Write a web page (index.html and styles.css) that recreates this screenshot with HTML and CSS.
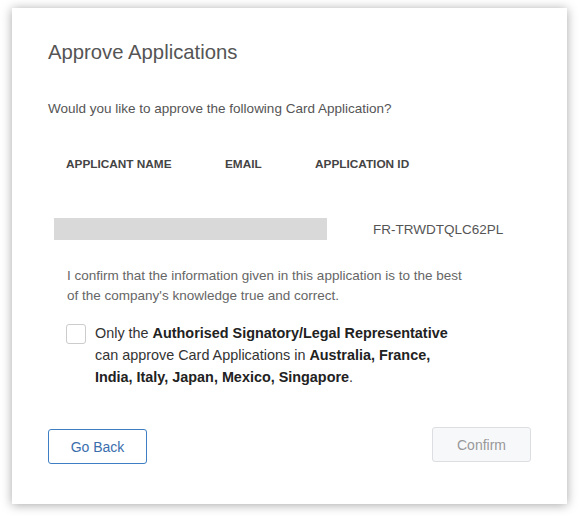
FILE: index.html
```html
<!DOCTYPE html>
<html>
<head>
<meta charset="utf-8">
<link rel="stylesheet" href="styles.css">
</head>
<body>
<div class="modal">
  <h1 class="title">Approve Applications</h1>
  <p class="lead">Would you like to approve the following Card Application?</p>
  <div class="table">
    <div class="row head">
      <div class="c1">APPLICANT NAME</div>
      <div class="c2">EMAIL</div>
      <div class="c3">APPLICATION ID</div>
    </div>
    <div class="row data">
      <div class="redacted"></div>
      <div class="appid">FR-TRWDTQLC62PL</div>
    </div>
  </div>
  <p class="confirm-text">I confirm that the information given in this application is to the best of the company's knowledge true and correct.</p>
  <label class="check">
    <span class="box"></span>
    <span class="check-text">Only the <b>Authorised Signatory/Legal Representative</b> can approve Card Applications in <b>Australia, France, India, Italy, Japan, Mexico, Singapore</b>.</span>
  </label>
  <div class="actions">
    <button class="btn back">Go Back</button>
    <button class="btn confirm" disabled>Confirm</button>
  </div>
</div>
</body>
</html>
```
FILE: styles.css
```css
html, body {
  margin: 0;
  padding: 0;
  background: #fff;
}
body {
  padding: 8px 12px 12px 12px;
  font-family: "Liberation Sans", Arial, sans-serif;
}
.modal {
  width: 555px;
  height: 496px;
  box-sizing: border-box;
  background: #fff;
  box-shadow: 0 1px 10px rgba(0,0,0,0.35);
  padding: 32px 36px 0 36px;
}
.title {
  margin: 0;
  font-size: 20.3px;
  font-weight: normal;
  color: #555;
  line-height: 24px;
}
.lead {
  margin: 37px 0 0 0;
  font-size: 13.5px;
  color: #555;
  line-height: 16px;
}
.table {
  margin-top: 39px;
}
.row {
  display: flex;
  align-items: center;
}
.head {
  padding-left: 18px;
  font-size: 11.8px;
  font-weight: bold;
  color: #444;
  line-height: 16px;
}
.c1 { width: 159px; }
.c2 { width: 90px; }
.data {
  margin-top: 46px;
  padding-left: 6px;
}
.redacted {
  width: 273px;
  height: 22px;
  background: #d9d9d9;
}
.appid {
  margin-left: 46px;
  font-size: 13.5px;
  color: #555;
}
.confirm-text {
  margin: 26px 0 0 0;
  padding-left: 19px;
  width: 400px;
  font-size: 13.5px;
  line-height: 20px;
  color: #666;
}
.check {
  display: flex;
  margin-top: 17px;
  padding-left: 18px;
}
.box {
  flex: none;
  width: 18px;
  height: 18px;
  border: 1px solid #ccc;
  border-radius: 3px;
  background: #fff;
  margin-top: 1px;
}
.check-text {
  margin-left: 9px;
  width: 370px;
  font-size: 14.4px;
  line-height: 22px;
  color: #333;
  margin-top: -1px;
}
.check-text b {
  color: #222;
}
.actions {
  display: flex;
  justify-content: space-between;
  align-items: flex-start;
  margin-top: 39px;
}
.btn {
  font-family: "Liberation Sans", Arial, sans-serif;
  font-size: 14px;
  width: 99px;
  height: 35px;
  border-radius: 3px;
  background: #fff;
}
.back {
  border: 1px solid #3f7ec2;
  color: #3a6ead;
  margin-top: 2px;
}
.confirm {
  border: 1px solid #dcdee2;
  background: #f7f8fa;
  color: #999;
}
```
